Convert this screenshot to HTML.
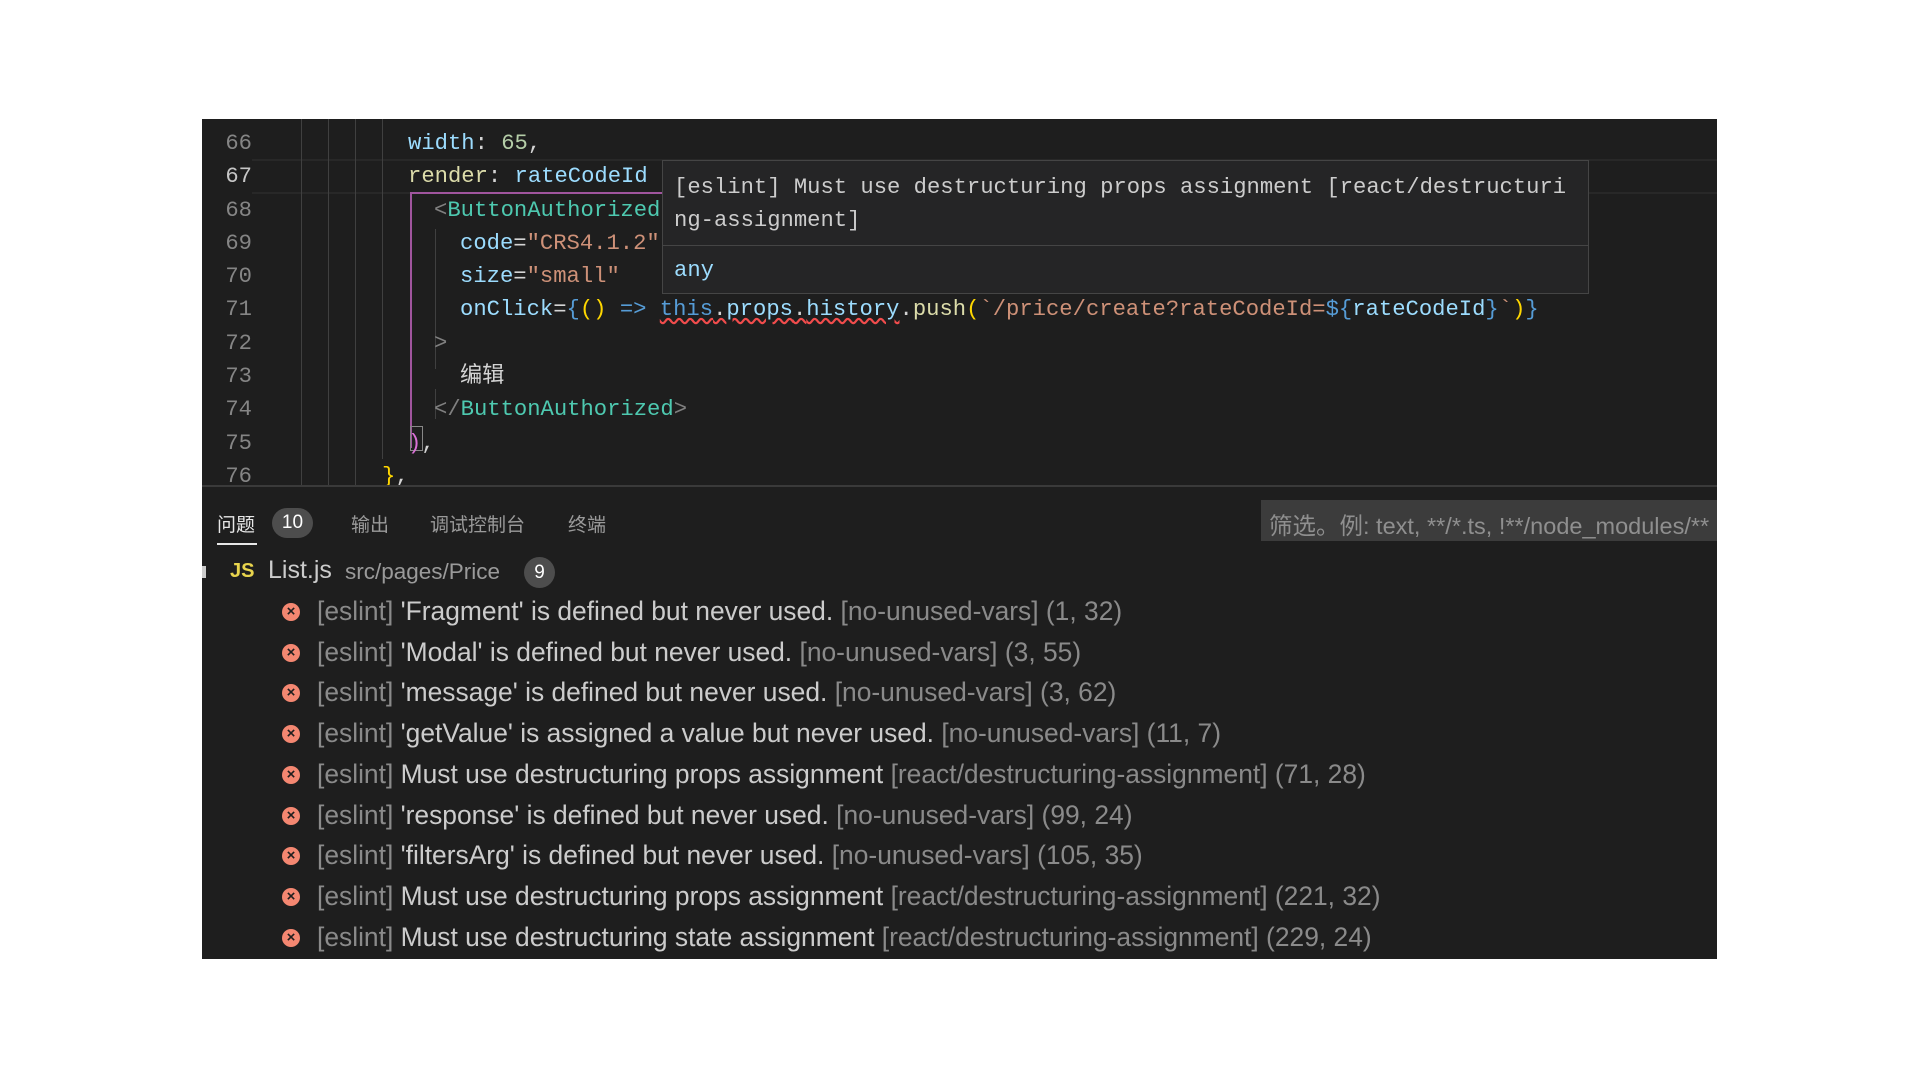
<!DOCTYPE html>
<html><head><meta charset="utf-8"><style>
body{margin:0;width:1920px;height:1080px;background:#fff;position:relative;overflow:hidden}
#p{position:absolute;left:202px;top:119px;width:1515px;height:840px;background:#1e1e1e;overflow:hidden}
.m{font-family:"Liberation Mono","Noto Sans CJK SC",monospace;font-size:22.2px;position:absolute;line-height:33.3px}
.m span{white-space:pre}
.ln{position:absolute;width:50px;text-align:right;left:0;color:#858585}
.s{font-family:"Liberation Sans","Noto Sans CJK SC",sans-serif;position:absolute;white-space:pre}
.g{position:absolute;width:1px;background:#404040}
.k{color:#9cdcfe}.n{color:#b5cea8}.y{color:#dcdcaa}.t{color:#4ec9b0}.gr{color:#808080}.st{color:#ce9178}.b{color:#569cd6}.w{color:#d4d4d4}.yb{color:#ffd700}
.e{color:#8a8a8a}.c{color:#cccccc}
.ic{position:absolute;width:18px;height:18px;border-radius:50%;background:#f48771;color:#1e1e1e;font:bold 15px/18px "Liberation Sans",sans-serif;text-align:center}
.r{position:relative;height:33.3px}
</style></head><body>
<div id="p">
<div style="position:absolute;left:50px;top:40px;width:1465px;height:31px;border-top:2px solid #282828;border-bottom:2px solid #282828"></div>
<div class="g" style="left:99px;top:0;height:366px"></div>
<div class="g" style="left:126px;top:0;height:366px"></div>
<div class="g" style="left:153px;top:0;height:366px"></div>
<div class="g" style="left:180px;top:0;height:340px"></div>
<div class="g" style="left:233px;top:110px;height:140px"></div>
<div class="g" style="left:233px;top:270px;height:30px"></div>
<div style="position:absolute;left:208px;top:73px;width:252px;height:2px;background:#a0559e"></div>
<div style="position:absolute;left:208px;top:73px;width:2px;height:256px;background:#a0559e"></div>
<div style="position:absolute;left:208px;top:307px;width:11px;height:23px;border:1px solid #888"></div>
<div class="m" style="left:0;top:8px;width:1515px">
<div class="r"><span class="ln">66</span><span style="position:absolute;left:206px"><span class="k">width</span><span class="w">: </span><span class="n">65</span><span class="w">,</span></span></div>
<div class="r"><span class="ln" style="color:#c6c6c6">67</span><span style="position:absolute;left:206px"><span class="y">render</span><span class="w">: </span><span class="k">rateCodeId</span></span></div>
<div class="r"><span class="ln">68</span><span style="position:absolute;left:232px"><span class="gr">&lt;</span><span class="t">ButtonAuthorized</span></span></div>
<div class="r"><span class="ln">69</span><span style="position:absolute;left:258px"><span class="k">code</span><span class="w">=</span><span class="st">"CRS4.1.2"</span></span></div>
<div class="r"><span class="ln">70</span><span style="position:absolute;left:258px"><span class="k">size</span><span class="w">=</span><span class="st">"small"</span></span></div>
<div class="r"><span class="ln">71</span><span style="position:absolute;left:258px"><span class="k">onClick</span><span class="w">=</span><span class="b">{</span><span class="yb">()</span><span> </span><span class="b">=&gt;</span><span> </span><span class="b" style="text-decoration:underline wavy #f14c4c">this</span><span class="w" style="text-decoration:underline wavy #f14c4c">.</span><span class="k" style="text-decoration:underline wavy #f14c4c">props</span><span class="w" style="text-decoration:underline wavy #f14c4c">.</span><span class="k" style="text-decoration:underline wavy #f14c4c">history</span><span class="w">.</span><span class="y">push</span><span class="yb">(</span><span class="st">`/price/create?rateCodeId=</span><span class="b">${</span><span class="k">rateCodeId</span><span class="b">}</span><span class="st">`</span><span class="yb">)</span><span class="b">}</span></span></div>
<div class="r"><span class="ln">72</span><span style="position:absolute;left:232px" class="gr">&gt;</span></div>
<div class="r"><span class="ln">73</span><span style="position:absolute;left:258px" class="w">编辑</span></div>
<div class="r"><span class="ln">74</span><span style="position:absolute;left:232px"><span class="gr">&lt;/</span><span class="t">ButtonAuthorized</span><span class="gr">&gt;</span></span></div>
<div class="r"><span class="ln">75</span><span style="position:absolute;left:206px"><span style="color:#da70d6">)</span><span class="w">,</span></span></div>
<div class="r"><span class="ln">76</span><span style="position:absolute;left:180px"><span class="yb">}</span><span class="w">,</span></span></div>
</div>
<div style="position:absolute;left:460px;top:41px;width:925px;height:132px;background:#252526;border:1px solid #454545">
<div class="m" style="left:11px;top:10px;color:#cccccc;white-space:pre">[eslint] Must use destructuring props assignment [react/destructuri</div>
<div class="m" style="left:11px;top:43px;color:#cccccc;white-space:pre">ng-assignment]</div>
<div style="position:absolute;left:0;top:84px;width:925px;height:1px;background:#454545"></div>
<div class="m" style="left:11px;top:93px;color:#9cdcfe">any</div>
</div>
<div style="position:absolute;left:0;top:366px;width:1515px;height:2px;background:#3a3a3a"></div>
<div class="s" style="left:15px;top:391px;font-size:19px;color:#e7e7e7">问题</div>
<div style="position:absolute;left:15px;top:424px;width:40px;height:2px;background:#e7e7e7"></div>
<div class="s" style="left:70px;top:389px;width:41px;height:30px;border-radius:15px;background:#4d4d4d;color:#fff;font-size:19px;line-height:30px;text-align:center">10</div>
<div class="s" style="left:149px;top:391px;font-size:19px;color:#9a9a9a">输出</div>
<div class="s" style="left:228px;top:391px;font-size:19px;color:#9a9a9a">调试控制台</div>
<div class="s" style="left:366px;top:391px;font-size:19px;color:#9a9a9a">终端</div>
<div style="position:absolute;left:1059px;top:381px;width:460px;height:41px;background:#3c3c3c"></div>
<div class="s" style="left:1067px;top:388px;font-size:23.5px;color:#8f8f8f">筛选。例: text, **/*.ts, !**/node_modules/**</div>
<div style="position:absolute;left:0;top:447px;width:4px;height:12px;background:#ccc"></div>
<div class="s" style="left:28px;top:441px;font-size:20px;font-weight:bold;color:#e8d44d">JS</div>
<div class="s" style="left:66px;top:437px;font-size:25px;color:#cccccc">List.js</div>
<div class="s" style="left:143px;top:440px;font-size:22.5px;color:#9a9a9a">src/pages/Price</div>
<div class="s" style="left:322px;top:438px;width:31px;height:31px;border-radius:50%;background:#4d4d4d;color:#fff;font-size:19px;line-height:31px;text-align:center">9</div>
<div id="errs"></div>
</div>
<script>
var r=[["'Fragment' is defined but never used.","[no-unused-vars]","(1, 32)"],["'Modal' is defined but never used.","[no-unused-vars]","(3, 55)"],["'message' is defined but never used.","[no-unused-vars]","(3, 62)"],["'getValue' is assigned a value but never used.","[no-unused-vars]","(11, 7)"],["Must use destructuring props assignment","[react/destructuring-assignment]","(71, 28)"],["'response' is defined but never used.","[no-unused-vars]","(99, 24)"],["'filtersArg' is defined but never used.","[no-unused-vars]","(105, 35)"],["Must use destructuring props assignment","[react/destructuring-assignment]","(221, 32)"],["Must use destructuring state assignment","[react/destructuring-assignment]","(229, 24)"]];
var h="";r.forEach(function(x,i){var y=477+i*40.7;h+='<div class="ic" style="left:80px;top:'+(y+7)+'px">×</div><div class="s" style="left:115px;top:'+y+'px;font-size:26.4px"><span class="e">[eslint] </span><span class="c">'+x[0]+'</span> <span class="e">'+x[1]+' '+x[2]+'</span></div>';});
document.getElementById("errs").innerHTML=h;
</script>
</body></html>
